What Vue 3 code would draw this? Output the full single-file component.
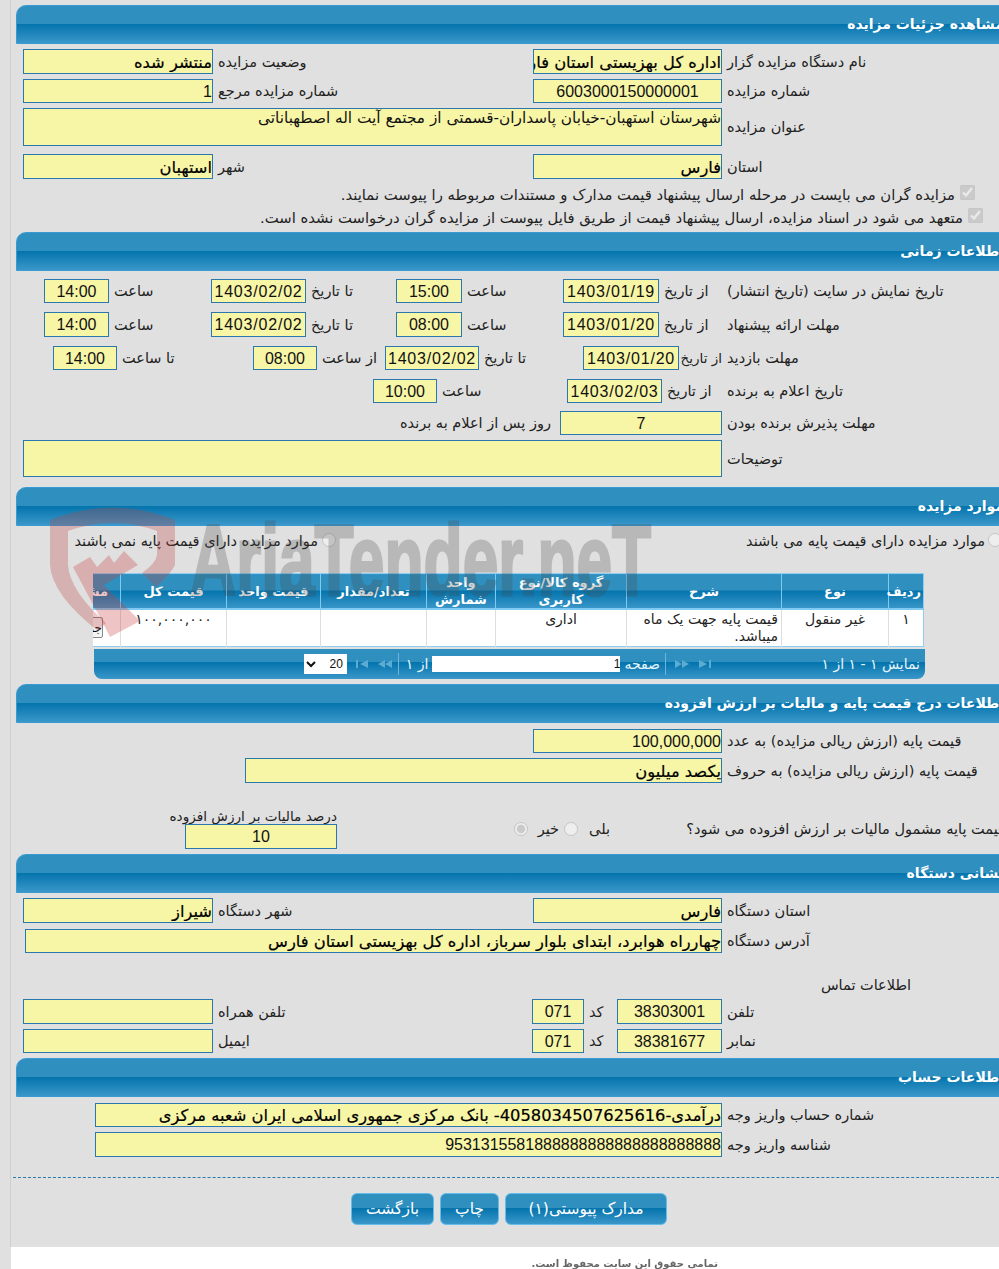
<template>
  <div class="page">
    <div class="main">
      <div class="bar">مشاهده جزئیات مزایده</div>
      <section class="form first">
        <div class="row cols-2 h25">
          <label>نام دستگاه مزایده گزار</label>
          <input class="strong" readonly value="اداره کل بهزیستی استان فارس" />
          <label>وضعیت مزایده</label>
          <input class="strong" readonly value="منتشر شده" />
        </div>
        <div class="row cols-2 h24">
          <label>شماره مزایده</label>
          <input class="center" readonly value="6003000150000001" />
          <label>شماره مزایده مرجع</label>
          <input class="num" readonly value="1" />
        </div>
        <div class="row cols-wide h38">
          <label>عنوان مزایده</label>
          <div class="area">شهرستان استهبان-خیابان پاسداران-قسمتی از مجتمع آیت اله اصطهباناتی</div>
        </div>
        <div class="row cols-2 h25 gap-8">
          <label>استان</label>
          <input class="strong" readonly value="فارس" />
          <label>شهر</label>
          <input class="strong" readonly value="استهبان" />
        </div>
        <div class="check check-a">
          <input type="checkbox" checked disabled />
          <span>مزایده گران می بایست در مرحله ارسال پیشنهاد قیمت مدارک و مستندات مربوطه را پیوست نمایند.</span>
        </div>
        <div class="check check-b">
          <input type="checkbox" checked disabled />
          <span>متعهد می شود در اسناد مزایده، ارسال پیشنهاد قیمت از طریق فایل پیوست از مزایده گران درخواست نشده است.</span>
        </div>
      </section>

      <div class="bar">اطلاعات زمانی</div>
      <section class="form times">
        <div class="row cols-time h24">
          <label>تاریخ نمایش در سایت (تاریخ انتشار)</label>
          <label>از تاریخ</label>
          <input class="center date" readonly value="1403/01/19" />
          <label>ساعت</label>
          <input class="center" readonly value="15:00" />
          <label>تا تاریخ</label>
          <input class="center date" readonly value="1403/02/02" />
          <label>ساعت</label>
          <input class="center" readonly value="14:00" />
        </div>
        <div class="row cols-time h25">
          <label>مهلت ارائه پیشنهاد</label>
          <label>از تاریخ</label>
          <input class="center date" readonly value="1403/01/20" />
          <label>ساعت</label>
          <input class="center" readonly value="08:00" />
          <label>تا تاریخ</label>
          <input class="center date" readonly value="1403/02/02" />
          <label>ساعت</label>
          <input class="center" readonly value="14:00" />
        </div>
        <div class="row cols-visit h24">
          <label>مهلت بازدید</label>
          <label>از تاریخ</label>
          <input class="center date" readonly value="1403/01/20" />
          <label>تا تاریخ</label>
          <input class="center date" readonly value="1403/02/02" />
          <label>از ساعت</label>
          <input class="center" readonly value="08:00" />
          <label>تا ساعت</label>
          <input class="center" readonly value="14:00" />
        </div>
        <div class="row cols-win h24">
          <label>تاریخ اعلام به برنده</label>
          <label>از تاریخ</label>
          <input class="center date" readonly value="1403/02/03" />
          <label>ساعت</label>
          <input class="center" readonly value="10:00" />
        </div>
        <div class="row cols-days h24">
          <label>مهلت پذیرش برنده بودن</label>
          <input class="center" readonly value="7" />
          <label class="after">روز پس از اعلام به برنده</label>
        </div>
        <div class="row cols-wide h37 notes">
          <label>توضیحات</label>
          <div class="area"></div>
        </div>
      </section>

      <div class="bar">موارد مزایده</div>
      <section class="items">
        <div class="radios">
          <div class="radio-a">
            <input type="radio" disabled />
            <span>موارد مزایده دارای قیمت پایه می باشند</span>
          </div>
          <div class="radio-b">
            <input type="radio" disabled />
            <span>موارد مزایده دارای قیمت پایه نمی باشند</span>
          </div>
        </div>
        <div class="grid-wrap">
          <table class="grid">
            <colgroup>
              <col v-for="w in colWidths" :key="w.id" :style="{ width: w.px + 'px' }" />
            </colgroup>
            <thead>
              <tr>
                <th>ردیف</th>
                <th>نوع</th>
                <th>شرح</th>
                <th>گروه کالا/نوع کاربری</th>
                <th>واحد شمارش</th>
                <th>تعداد/مقدار</th>
                <th>قیمت واحد</th>
                <th>قیمت کل</th>
                <th class="clip head-clip">مشاهده</th>
              </tr>
            </thead>
            <tbody>
              <tr>
                <td class="mid">۱</td>
                <td class="mid">غیر منقول</td>
                <td>قیمت پایه جهت یک ماه میباشد.</td>
                <td class="mid">اداری</td>
                <td></td>
                <td></td>
                <td></td>
                <td class="mid">۱۰۰,۰۰۰,۰۰۰</td>
                <td class="clip"><button class="detail">جزئیات</button></td>
              </tr>
            </tbody>
          </table>
        </div>
        <div class="pager">
          <span class="pager-info">نمایش ۱ - ۱ از ۱</span>
          <svg class="nav" width="14" height="10" viewBox="0 0 14 10"><path d="M1 1l8 4-8 4zM11 1h2v8h-2z" /></svg>
          <svg class="nav" width="16" height="10" viewBox="0 0 16 10"><path d="M1 1l7 4-7 4zM8 1l7 4-7 4z" /></svg>
          <i class="sep"></i>
          <span class="pager-label">صفحه</span>
          <input class="pager-input" readonly value="1" />
          <span class="pager-label pager-of">از ۱</span>
          <i class="sep"></i>
          <svg class="nav" width="16" height="10" viewBox="0 0 16 10"><path d="M15 1L8 5l7 4zM8 1L1 5l7 4z" /></svg>
          <svg class="nav" width="14" height="10" viewBox="0 0 14 10"><path d="M13 1L5 5l8 4zM1 1h2v8H1z" /></svg>
          <select class="pager-size" disabled>
            <option>20</option>
          </select>
        </div>
      </section>

      <div class="bar">اطلاعات درج قیمت پایه و مالیات بر ارزش افزوده</div>
      <section class="form prices">
        <div class="row cols-price h24">
          <label>قیمت پایه (ارزش ریالی مزایده) به عدد</label>
          <input class="num" readonly value="100,000,000" />
        </div>
        <div class="row cols-letters h25">
          <label>قیمت پایه (ارزش ریالی مزایده) به حروف</label>
          <input class="strong" readonly value="یکصد میلیون" />
        </div>
        <div class="tax">
          <span class="tax-q">قیمت پایه مشمول مالیات بر ارزش افزوده می شود؟</span>
          <div class="tax-opts">
            <label>بلی</label>
            <input type="radio" name="vat" disabled />
            <label>خیر</label>
            <input type="radio" name="vat" checked disabled />
          </div>
          <div class="tax-rate">
            <label>درصد مالیات بر ارزش افزوده</label>
            <input class="center" readonly value="10" />
          </div>
        </div>
      </section>

      <div class="bar">نشانی دستگاه</div>
      <section class="form address">
        <div class="row cols-2 h25">
          <label>استان دستگاه</label>
          <input class="strong" readonly value="فارس" />
          <label>شهر دستگاه</label>
          <input class="strong" readonly value="شیراز" />
        </div>
        <div class="row cols-addr h24 addr-line">
          <label>آدرس دستگاه</label>
          <input class="strong" readonly value="چهارراه هوابرد، ابتدای بلوار سرباز، اداره کل بهزیستی استان فارس" />
        </div>
        <div class="contact-title">اطلاعات تماس</div>
        <div class="row cols-phone h25">
          <label>تلفن</label>
          <input class="center" readonly value="38303001" />
          <label>کد</label>
          <input class="center" readonly value="071" />
          <label>تلفن همراه</label>
          <input readonly value="" />
        </div>
        <div class="row cols-phone h24">
          <label>نمابر</label>
          <input class="center" readonly value="38381677" />
          <label>کد</label>
          <input class="center" readonly value="071" />
          <label>ایمیل</label>
          <input readonly value="" />
        </div>
      </section>

      <div class="bar">اطلاعات حساب</div>
      <section class="form account">
        <div class="row cols-acc h24">
          <label>شماره حساب واریز وجه</label>
          <input class="strong" readonly value="درآمدی-4058034507625616- بانک مرکزی جمهوری اسلامی ایران شعبه مرکزی" />
        </div>
        <div class="row cols-acc h25">
          <label>شناسه واریز وجه</label>
          <input class="num" readonly value="9531315581888888888888888888888" />
        </div>
      </section>

      <div class="dashed"></div>
      <div class="actions">
        <button class="btn btn-docs">مدارک پیوستی(۱)</button>
        <button class="btn btn-print">چاپ</button>
        <button class="btn btn-back">بازگشت</button>
      </div>
    </div>

    <footer class="foot">تمامی حقوق این سایت محفوظ است.</footer>

    <!-- site watermark lies over the form -->
    <div class="watermark">
      <svg class="wm-shield" width="130" height="140" viewBox="0 0 130 140">
        <path class="wm-outline" d="M2 17Q65-8 127 17V62Q122 72 108 84L94 70Q108 60 109 52V28Q65 12 20 28V62Q22 88 58 120L50 128Q4 92 2 62z" />
        <path class="wm-mark" d="M25 64L42 54 49 64 61 52 66 60 76 48 90 62 56 82 92 118 62 134 56 122z" />
      </svg>
      <span class="wm-text">AriaTender.neT</span>
    </div>
  </div>
</template>

<script setup>
const colWidths = [35, 107, 155, 131, 69, 106, 94, 106, 28].map((px, id) => ({ id, px }));
</script>

<style>
html,
body {
  margin: 0;
  background: #e0e0e0;
}
</style>

<style scoped>
.page {
  position: relative;
  width: 999px;
  overflow: hidden;
  direction: rtl;
  font-family: "DejaVu Sans", "Liberation Sans", sans-serif;
  font-size: 14.5px;
  color: #222;
}
.main {
  margin-left: 10px;
  padding-top: 5px;
  height: 1242px;
  border-left: 1px solid #cfcfcf;
  background: #e0e0e0;
}
.bar {
  box-sizing: border-box;
  height: 39px;
  margin-left: 5px;
  margin-right: -6px;
  padding-top: 6px;
  border: 1px solid #3a9ad4;
  border-top-left-radius: 10px;
  background: linear-gradient(#2f90c0 0, #2f90c0 49%, #0474ad 49%, #3a97c9 100%);
  color: #fff;
  font-size: 14px;
  font-weight: bold;
  line-height: 24px;
  white-space: nowrap;
}
.form {
  display: flex;
  flex-direction: column;
  box-sizing: border-box;
}
.first {
  padding-top: 5px;
  height: 188px;
  gap: 5px;
}
.times {
  padding-top: 8px;
  height: 216px;
  gap: 9px;
}
.prices {
  padding-top: 6px;
  height: 131px;
  gap: 5px;
}
.address {
  padding-top: 5px;
  height: 165px;
  gap: 5px;
}
.account {
  padding-top: 6px;
  height: 80px;
  gap: 5px;
}
.row {
  display: grid;
}
.h24 {
  height: 24px;
}
.h25 {
  height: 25px;
}
.h37 {
  height: 37px;
}
.h38 {
  height: 38px;
}
.gap-8 {
  margin-top: 3px;
}
.notes {
  margin-top: -4px;
}
.addr-line {
  margin-top: 1px;
}
.cols-2 {
  grid-template-columns: 277px 189px 320px 190px;
}
.cols-wide {
  grid-template-columns: 277px 699px;
}
.cols-time {
  grid-template-columns: 277px 63px 96px 101px 66px 90px 95px 102px 65px;
}
.cols-visit {
  grid-template-columns: 277px 43px 96px 104px 94px 68px 64px 136px 64px;
}
.cols-visit label:nth-child(2) {
  font-size: 13.5px;
}
.cols-win {
  grid-template-columns: 277px 60px 95px 130px 64px;
}
.cols-days {
  grid-template-columns: 277px 162px auto;
  margin-top: -1px;
}
.cols-price {
  grid-template-columns: 277px 189px;
}
.cols-letters {
  grid-template-columns: 277px 477px;
}
.cols-addr {
  grid-template-columns: 277px 697px;
}
.cols-phone {
  grid-template-columns: 277px 105px 33px 52px 319px 190px;
}
.cols-acc {
  grid-template-columns: 277px 627px;
}
label {
  align-self: center;
  padding-left: 5px;
  text-align: left;
  white-space: nowrap;
}
.after {
  padding-left: 0;
  padding-right: 9px;
  text-align: right;
}
input {
  box-sizing: border-box;
  width: 100%;
  height: 100%;
  min-width: 0;
  margin: 0;
  padding: 1px 0 0;
  border: 1px solid #2a78ad;
  border-radius: 0;
  outline: none;
  background: #f7f5a6;
  color: #111;
  font-family: "Liberation Sans", "DejaVu Sans", sans-serif;
  font-size: 16px;
}
.strong {
  font-family: "DejaVu Sans", sans-serif;
  font-size: 16.3px;
  color: #000;
  -webkit-text-stroke: 0.2px #000;
}
.center {
  direction: ltr;
  text-align: center;
}
.date {
  letter-spacing: 0.8px;
}
.num {
  direction: ltr;
  text-align: right;
}
.area {
  box-sizing: border-box;
  padding: 0;
  border: 1px solid #2a78ad;
  background: #f7f5a6;
  color: #111;
  font-size: 15.3px;
  line-height: 18px;
  white-space: nowrap;
}
.check {
  display: flex;
  align-items: flex-start;
  gap: 5px;
  height: 18px;
  font-size: 14.8px;
}
.check input {
  width: 15px;
  height: 15px;
  margin: -1px 0 0;
  padding: 0;
  flex: none;
}
.radios input,
.tax-opts input {
  width: 14px;
  height: 14px;
  margin: 0;
  padding: 0;
  flex: none;
}
.check-a {
  margin-top: 2px;
  margin-right: 24px;
}
.check-b {
  margin-right: 16px;
}
.items {
  height: 158px;
}
.radios {
  display: flex;
  box-sizing: border-box;
  height: 47px;
  margin-right: -3px;
  padding-top: 7px;
}
.radio-a,
.radio-b {
  display: flex;
  align-items: flex-start;
  gap: 3px;
  height: 20px;
}
.radio-a {
  width: 666px;
}
.radio-b {
  gap: 4px;
}
.radios span {
  white-space: nowrap;
}
.grid-wrap {
  width: 831px;
  margin-right: 75px;
  overflow: hidden;
}
.grid {
  width: 831px;
  table-layout: fixed;
  border-collapse: collapse;
  border: 1px solid #8fcdee;
  background: #fff;
}
.grid th {
  height: 33px;
  padding: 0 2px;
  border-left: 1px solid #7fcaf2;
  border-bottom: 2px solid #7fcaf2;
  background: linear-gradient(#2f90c0 0, #2f90c0 48%, #0474ad 48%, #3a97c9 100%);
  color: #fff;
  font-size: 13px;
  line-height: 17px;
}
.grid td {
  height: 35px;
  padding: 1px 3px 0;
  border-left: 1px solid #dedede;
  vertical-align: top;
  font-size: 14px;
  line-height: 17px;
}
.grid .mid {
  text-align: center;
}
.grid .clip {
  padding: 0;
  border-left: none;
  overflow: hidden;
  white-space: nowrap;
}
.grid .head-clip {
  padding-right: 12px;
  text-align: right;
}
.detail {
  display: block;
  height: 21px;
  margin: 7px 17px 0 0;
  padding: 0;
  border: 1px solid #888;
  border-radius: 2px;
  background: #f4f4f4;
  font: 12px "DejaVu Sans", sans-serif;
}
.pager {
  display: flex;
  align-items: center;
  box-sizing: border-box;
  width: 831px;
  height: 30px;
  margin-top: 2px;
  margin-right: 74px;
  padding-right: 5px;
  border-radius: 0 0 8px 8px;
  background: linear-gradient(#2f90c0 0, #2f90c0 45%, #0474ad 45%, #3a97c9 100%);
  color: #e8f6fc;
  font-size: 14px;
}
.pager-info {
  width: 208px;
  white-space: nowrap;
}
.nav {
  margin-left: 8px;
  fill: #5cabd2;
}
.sep {
  width: 1px;
  height: 22px;
  margin: 0 0 0 5px;
  background: #6db3d6;
}
.pager-label {
  margin-left: 4px;
  white-space: nowrap;
}
.pager-of {
  margin-left: 7px;
}
.pager-input {
  width: 188px;
  height: 16px;
  margin-left: 4px;
  padding: 0;
  border: none;
  background: #fff;
  font-size: 12px;
}
.pager-size {
  width: 43px;
  height: 20px;
  border: none;
  border-radius: 0;
  background: #fff;
  color: #111;
  font: 12px "Liberation Sans", sans-serif;
  opacity: 1;
}
.tax {
  display: flex;
  align-items: flex-start;
  height: 41px;
  margin-top: 20px;
}
.tax-q {
  flex: none;
  width: 395px;
  margin-top: 12px;
  margin-right: -6px;
  line-height: 18px;
  text-align: right;
  white-space: nowrap;
}
.tax-opts {
  display: flex;
  align-items: center;
  flex: none;
  width: 273px;
  height: 25px;
  margin-top: 8px;
}
.tax-opts label {
  padding: 0;
}
.tax-opts input:nth-child(2) {
  margin: 0 11px 0 5px;
}
.tax-opts input:nth-child(4) {
  margin-right: 10px;
}
.tax-rate {
  display: flex;
  flex-direction: column;
  flex: none;
  width: 152px;
}
.tax-rate label {
  align-self: auto;
  height: 16px;
  padding: 0;
  font-size: 13.6px;
  line-height: 16px;
  text-align: right;
}
.tax-rate input {
  height: 25px;
}
.contact-title {
  box-sizing: border-box;
  height: 36px;
  padding: 19px 88px 0 0;
  line-height: 17px;
}
.dashed {
  height: 0;
  margin: 0 0 0 2px;
  border-top: 1px dashed #2a78ad;
}
.actions {
  display: flex;
  gap: 6px;
  margin-top: 15px;
  margin-right: 332px;
}
.btn {
  height: 32px;
  padding: 0;
  border: 1px solid #62bdea;
  border-radius: 6px;
  background: linear-gradient(#2f90c0 0, #2f90c0 48%, #0474ad 48%, #3a97c9 100%);
  color: #fff;
  font: 15.5px "DejaVu Sans", sans-serif;
}
.btn-docs {
  width: 162px;
}
.btn-print {
  width: 59px;
}
.btn-back {
  width: 83px;
}
.foot {
  box-sizing: border-box;
  height: 22px;
  margin-left: 11px;
  padding: 10px 281px 0 0;
  background: #fff;
  color: #666;
  font-size: 10px;
  font-weight: bold;
  line-height: 14px;
  filter: blur(0.4px);
}
.watermark {
  position: absolute;
  top: 503px;
  left: 48px;
  width: 620px;
  height: 140px;
  direction: ltr;
  pointer-events: none;
}
.wm-shield {
  position: absolute;
  top: 0;
  left: 0;
}
.wm-outline {
  fill: rgba(190, 70, 70, 0.3);
}
.wm-mark {
  fill: rgba(200, 60, 60, 0.3);
}
.wm-text {
  position: absolute;
  top: 0;
  left: 142px;
  color: #464646;
  opacity: 0.25;
  font-family: "Liberation Sans", sans-serif;
  font-size: 100px;
  font-weight: bold;
  line-height: 115px;
  white-space: nowrap;
  -webkit-text-stroke: 3px #464646;
  transform: scaleX(0.64);
  transform-origin: left top;
}
</style>
